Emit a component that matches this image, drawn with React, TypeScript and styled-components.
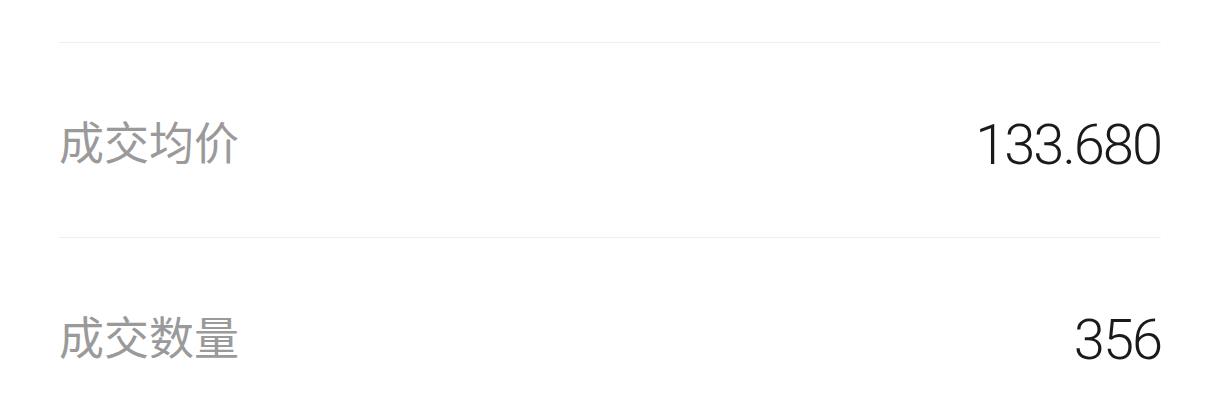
import React from 'react'
import styled, { createGlobalStyle } from 'styled-components'

const GlobalStyle = createGlobalStyle`
    html, body {
        margin: 0;
        padding: 0;
        background: #ffffff;
    }
    body {
        font-family: 'Noto Sans CJK SC', 'Noto Sans', sans-serif;
    }
`

interface Item {
    label: string
    value: string
}

const items: Item[] = [
    { label: '成交均价', value: '133.680' },
    { label: '成交数量', value: '356' },
]

export default function App() {
    return (
        <>
            <GlobalStyle />
            <Page>
                <TopGap />
                <List>
                    {items.map((v, i) => (
                        <Row key={i}>
                            <Label>{v.label}</Label>
                            <Value>{v.value}</Value>
                        </Row>
                    ))}
                </List>
            </Page>
        </>
    )
}

const Page = styled.div`
    width: 1214px;
    height: 401px;
    overflow: hidden;
    padding: 0 53px 0 59px;
    box-sizing: border-box;
    background: #ffffff;
`

const TopGap = styled.div`
    height: 42px;
`

const List = styled.div`
    display: flex;
    flex-direction: column;
`

const Row = styled.div`
    display: flex;
    align-items: center;
    justify-content: space-between;
    height: 195px;
    box-sizing: border-box;
    border-top: 1px solid #efefef;
`

const Label = styled.span`
    font-family: 'Noto Sans CJK SC', sans-serif;
    font-size: 45px;
    font-weight: 400;
    line-height: 1;
    color: #9a9a9a;
`

const Value = styled.span`
    font-family: Roboto, 'Liberation Sans', sans-serif;
    font-size: 56px;
    font-weight: 300;
    line-height: 1;
    letter-spacing: -2px;
    color: #1a1a1a;
    margin-top: 10px;
`
